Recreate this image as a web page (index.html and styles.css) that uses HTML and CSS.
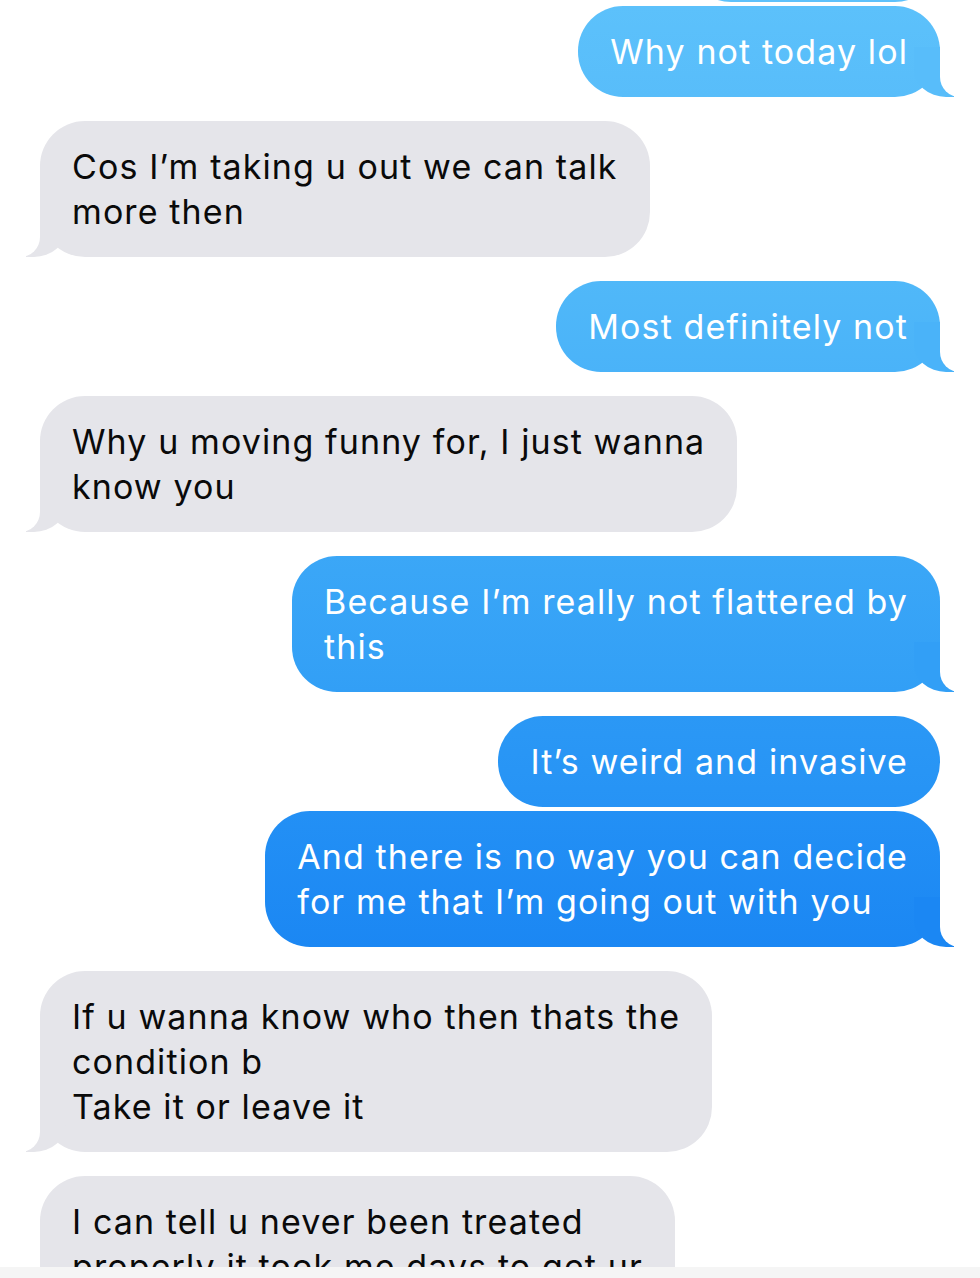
FILE: index.html
```html
<!DOCTYPE html>
<html lang="en">
<head>
    <meta charset="UTF-8">
    <meta name="viewport" content="width=device-width, initial-scale=1.0">
    <title>Messages</title>
    <link rel="stylesheet" href="styles.css">
</head>
<body>

    <div class="thread">
        <div class="msg sent shade-0 first">Tomorrow?</div>
        <div class="msg sent shade-1 cont tail">Why not today lol</div>

        <div class="msg received tail">Cos I’m taking u out we can talk<br>more then</div>

        <div class="msg sent shade-2 tail">Most definitely not</div>

        <div class="msg received tail">Why u moving funny for, I just wanna<br>know you</div>

        <div class="msg sent shade-3 tail">Because I’m really not flattered by<br>this</div>
        <div class="msg sent shade-4">It’s weird and invasive</div>
        <div class="msg sent shade-5 cont tail">And there is no way you can decide<br>for me that I’m going out with you</div>

        <div class="msg received tail">If u wanna know who then thats the<br>condition b<br>Take it or leave it</div>
        <div class="msg received tail">I can tell u never been treated<br>properly it took me days to get ur</div>
    </div>

    <div class="home-bar"></div>

</body>
</html>
```

FILE: styles.css
```css
body {
    margin: 0;
    background-color: #fff;
    font-family: Inter, "Liberation Sans", sans-serif;
}
.thread {
    height: 1267px;
    overflow: hidden;
    display: flex;
    flex-direction: column;
    padding: 0 40px;
}
.msg {
    position: relative;
    padding: 23px 32px;
    font-size: 34px;
    line-height: 45px;
    letter-spacing: 1.1px;
    border-radius: 45px;
    margin-top: 24px;
}
.msg.first {
    margin-top: -89px;
}
.msg.cont {
    margin-top: 4px;
}
.sent {
    align-self: flex-end;
    color: #fff;
    background: linear-gradient(var(--top), var(--bottom));
}
.received {
    align-self: flex-start;
    color: #0a0a0a;
    background-color: #e5e5ea;
}
.shade-0 { --top: #60c3fb; --bottom: #5ec1fb; }
.shade-1 { --top: #5cc1fb; --bottom: #58bdfa; }
.shade-2 { --top: #50b8f9; --bottom: #4ab3f9; }
.shade-3 { --top: #3ba7f7; --bottom: #329ff6; }
.shade-4 { --top: #2b98f5; --bottom: #2693f5; }
.shade-5 { --top: #2390f5; --bottom: #1b87f3; }

/* bubble tails */
.tail::before,
.tail::after {
    content: "";
    position: absolute;
    bottom: 0;
    height: 50px;
}
.sent.tail::before {
    right: -14px;
    width: 40px;
    background-color: var(--bottom);
    border-bottom-left-radius: 32px 28px;
}
.sent.tail::after {
    right: -52px;
    width: 52px;
    background-color: #fff;
    border-bottom-left-radius: 20px;
}
.received.tail::before {
    left: -14px;
    width: 40px;
    background-color: #e5e5ea;
    border-bottom-right-radius: 32px 28px;
}
.received.tail::after {
    left: -52px;
    width: 52px;
    background-color: #fff;
    border-bottom-right-radius: 20px;
}
.home-bar {
    height: 11px;
    background-color: #f5f5f5;
}
```
